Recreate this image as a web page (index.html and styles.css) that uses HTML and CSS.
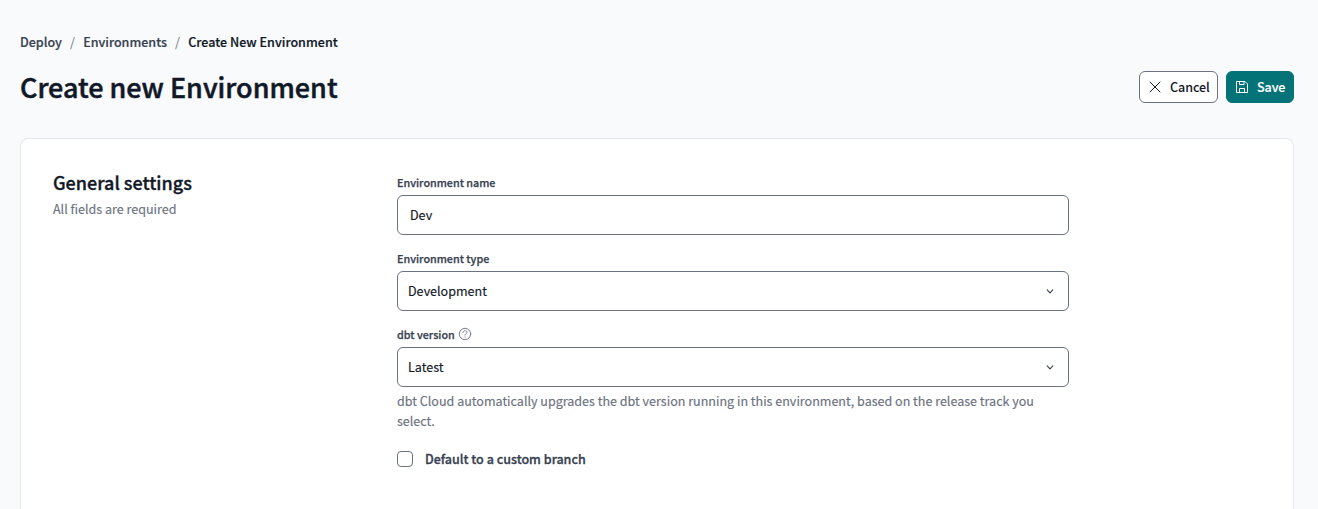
FILE: index.html
```html
<!DOCTYPE html>
<html lang="en">
<head>
<meta charset="utf-8">
<title>Create new Environment</title>
<link rel="stylesheet" href="styles.css">
</head>
<body>
<header class="page-header">
  <nav class="breadcrumbs" aria-label="Breadcrumb">
    <a class="crumb">Deploy</a><span class="divider">/</span><a class="crumb">Environments</a><span class="divider">/</span><span class="crumb current">Create New Environment</span>
  </nav>
  <div class="title-row">
    <h1 class="title">Create new Environment</h1>
    <div class="actions">
      <button class="button cancel" type="button">
        <svg class="button-icon" viewBox="0 0 14 14" fill="none" stroke="currentColor" stroke-width="1" stroke-linecap="round"><path d="M2 2l10 10M12 2L2 12"/></svg>
        <span>Cancel</span>
      </button>
      <button class="button save" type="button">
        <svg class="button-icon" viewBox="0 0 14 14" fill="none" stroke="currentColor" stroke-width="1" stroke-linejoin="round"><path d="M1.500 1.500h8.500l2.500 2.500v8.500h-11zM4.500 1.500v3h4.500v-3M4.500 12.500V8.500h5v4"/></svg>
        <span>Save</span>
      </button>
    </div>
  </div>
</header>
<main class="card">
  <section class="intro">
    <h2 class="section-title">General settings</h2>
    <p class="section-note">All fields are required</p>
  </section>
  <form class="fields">
    <div class="field">
      <label class="label"><span>Environment name</span></label>
      <div class="control input"><span>Dev</span></div>
    </div>
    <div class="field">
      <label class="label"><span>Environment type</span></label>
      <div class="control select"><span>Development</span>
        <svg class="chevron" viewBox="0 0 10 10" fill="none" stroke="currentColor" stroke-width="1.1" stroke-linecap="round" stroke-linejoin="round"><path d="M2.200 3.800L5 6.800l2.800-3"/></svg>
      </div>
    </div>
    <div class="field">
      <label class="label"><span>dbt version</span>
        <svg class="help" viewBox="0 0 14 14" fill="none" stroke="currentColor" stroke-width=".9" stroke-linecap="round"><circle cx="7" cy="7" r="5.700"/><path d="M5 5.400C5.100 4.200 6 3.700 7 3.700s2 .6 2 1.700C9 6.700 7 6.700 7 8.200M7 10v.2"/></svg>
      </label>
      <div class="control select"><span>Latest</span>
        <svg class="chevron" viewBox="0 0 10 10" fill="none" stroke="currentColor" stroke-width="1.1" stroke-linecap="round" stroke-linejoin="round"><path d="M2.200 3.800L5 6.800l2.800-3"/></svg>
      </div>
      <p class="hint">dbt Cloud automatically upgrades the dbt version running in this environment, based on the release track you<br>select.</p>
    </div>
    <div class="check-row"><span class="checkbox"></span><span class="check-label">Default to a custom branch</span></div>
  </form>
</main>
</body>
</html>
```
FILE: styles.css
```css
* { box-sizing: border-box; }
body {
  display: flex;
  flex-direction: column;
  margin: 0;
  height: 100vh;
  padding: 32px 24px 0 20px;
  background: #f9fafc;
  color: #111827;
  font: 400 12.54px/20px "Noto Sans CJK SC", "Noto Sans", sans-serif;
}
h1, h2, p { margin: 0; }
.breadcrumbs {
  display: flex;
  height: 20px;
  font-weight: 500;
  -webkit-text-stroke: 0.2px;
  white-space: nowrap;
}
.crumb { color: #374151; }
.crumb.current { color: #111827; letter-spacing: 0.02px; }
.divider { width: 21.2px; text-align: center; color: #6b7280; font-weight: 400; -webkit-text-stroke: 0; }
.title-row { display: flex; justify-content: space-between; align-items: center; height: 36px; margin-top: 17px; }
.title {
  font-size: 26.95px;
  line-height: 36px;
  font-weight: 500;
  -webkit-text-stroke: 0.5px;
  white-space: nowrap;
}
.actions { display: flex; gap: 8px; }
.button {
  display: flex;
  align-items: center;
  gap: 8px;
  height: 32px;
  padding: 0 8px;
  border: 1px solid #6b7280;
  border-radius: 6px;
  font: inherit;
  font-weight: 500;
  letter-spacing: -0.08px;
}
.cancel { width: 79px; background: #fff; color: #111827; }
.save { width: 68px; border-color: #047377; background: #047377; color: #fff; -webkit-text-stroke: 0.15px; }
.button-icon { width: 14px; height: 14px; flex: none; }
.card {
  display: flex;
  flex: 1;
  min-height: 0;
  margin-top: 33px;
  padding: 32px 32px 0;
  border: 1px solid #e5e7eb;
  border-bottom: 0;
  border-radius: 8px 8px 0 0;
  background: #fff;
}
.intro { width: 344px; }
.section-title { font-size: 18px; line-height: 22px; font-weight: 500; -webkit-text-stroke: 0.35px; }
.section-note { margin-top: 6px; color: #6b7280; -webkit-text-stroke: 0.12px; }
.fields { width: 672px; padding-top: 2px; }
.field { margin-bottom: 14px; }
.label {
  display: flex;
  align-items: center;
  gap: 3px;
  height: 20px;
  margin-bottom: 2px;
  color: #374151;
  font-size: 10.75px;
  font-weight: 500;
  -webkit-text-stroke: 0.25px;
}
.help { width: 14px; height: 14px; margin-bottom: 2px; color: #6b7280; }
.control {
  display: flex;
  align-items: center;
  justify-content: space-between;
  height: 40px;
  border: 1px solid #6b7280;
  border-radius: 6px;
  -webkit-text-stroke: 0.15px;
}
.input { padding: 0 12px; }
.select { padding: 0 13px 0 10px; }
.chevron { width: 10px; height: 10px; color: #374151; }
.hint { margin-top: 4px; color: #6b7280; white-space: nowrap; -webkit-text-stroke: 0.15px; }
.check-row { display: flex; align-items: center; gap: 12px; height: 20px; margin-top: 18px; }
.checkbox { width: 16px; height: 16px; border: 1px solid #6b7280; border-radius: 4px; }
.check-label { color: #374151; font-weight: 500; -webkit-text-stroke: 0.3px; }
```
